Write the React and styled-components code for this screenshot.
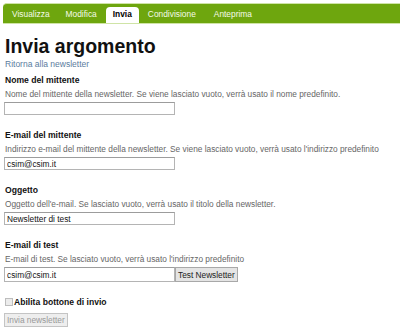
import React from "react";
import styled, { createGlobalStyle } from "styled-components";

const Global = createGlobalStyle`
  body {
    margin: 0;
    background: #fff;
    font-family: "Liberation Sans", Arial, sans-serif;
  }
`;

const Page = styled.div`
  padding: 3px 0 0 0;
`;

const TabBar = styled.div`
  display: flex;
  align-items: flex-end;
  margin-left: 3px;
  height: 19px;
  padding-left: 2px;
  background: #6ea60e;
  border-top: 1px solid #cfe4a6;
  border-bottom: 1px solid #cfe4a6;
  border-top-left-radius: 4px;
`;

const Tab = styled.div`
  height: 16px;
  line-height: 15px;
  padding: 0 ${(p) => p.$pad || 7}px;
  font-size: 8.4px;
  color: ${(p) => (p.$active ? "#000" : "#f4fae8")};
  font-weight: ${(p) => (p.$active ? "bold" : "normal")};
  background: ${(p) => (p.$active ? "#fff" : "transparent")};
  border-radius: 4px 4px 0 0;
  margin-right: ${(p) => p.$gap || 2}px;
`;

const Content = styled.div`
  padding-left: 4px;
`;

const Title = styled.h1`
  margin: 10px 0 0 1px;
  font-size: 19.5px;
  line-height: 24px;
  font-weight: bold;
  color: #111;
`;

const BackLink = styled.a`
  display: block;
  margin-left: 1px;
  font-size: 8.5px;
  line-height: 13px;
  color: #5b7c9e;
  text-decoration: none;
`;

const Section = styled.div`
  margin-top: ${(p) => p.$top || 0}px;
  margin-bottom: 13px;
`;

const Label = styled.div`
  margin-left: 1px;
  font-size: 8.6px;
  line-height: 14px;
  font-weight: bold;
  color: #111;
`;

const Desc = styled.div`
  margin-left: 1px;
  font-size: 8.3px;
  line-height: 14px;
  color: #666;
`;

const Row = styled.div`
  display: flex;
  align-items: stretch;
  margin-top: 1px;
`;

const Field = styled.input`
  box-sizing: border-box;
  display: block;
  width: 171px;
  height: ${(p) => p.$h || 13}px;
  margin: 1px 0 0 0;
  padding: 0 2px;
  border: 1px solid #b4b4b4;
  border-top-color: #9c9c9c;
  font-family: inherit;
  font-size: 8.3px;
  color: #111;
  background: #fff;
  outline: none;
`;

const Button = styled.button`
  box-sizing: border-box;
  height: ${(p) => p.$h || 15}px;
  padding: 0 2px;
  margin: 0;
  border: 1px solid ${(p) => (p.disabled ? "#c4c4c4" : "#a8a8a8")};
  background: ${(p) => (p.disabled ? "#eeeeee" : "#e4e4e4")};
  color: ${(p) => (p.disabled ? "#999" : "#222")};
  font-family: inherit;
  font-size: 8.3px;
  border-radius: 0;
`;

const CheckRow = styled.label`
  display: flex;
  align-items: center;
  margin-left: 1px;
  font-size: 8.6px;
  line-height: 14px;
  font-weight: bold;
  color: #111;
`;

const Box = styled.span`
  box-sizing: border-box;
  width: 8px;
  height: 8px;
  margin-right: 1px;
  border: 1px solid #bdbdbd;
  background: #ececec;
`;

const sections = [
  {
    label: "Nome del mittente",
    desc: "Nome del mittente della newsletter. Se viene lasciato vuoto, verrà usato il nome predefinito.",
    value: "",
  },
  {
    label: "E-mail del mittente",
    desc: "Indirizzo e-mail del mittente della newsletter. Se viene lasciato vuoto, verrà usato l'indirizzo predefinito",
    value: "csim@csim.it",
  },
  {
    label: "Oggetto",
    desc: "Oggetto dell'e-mail. Se lasciato vuoto, verrà usato il titolo della newsletter.",
    value: "Newsletter di test",
  },
];

const App = () => {
  return (
    <Page>
      <Global />
      <TabBar>
        <Tab $gap={2}>Visualizza</Tab>
        <Tab $gap={2}>Modifica</Tab>
        <Tab $active $gap={2}>Invia</Tab>
        <Tab $gap={4}>Condivisione</Tab>
        <Tab>Anteprima</Tab>
      </TabBar>
      <Content>
        <Title>Invia argomento</Title>
        <BackLink href="#">Ritorna alla newsletter</BackLink>
        {sections.map((s, i) => (
          <Section key={s.label} $top={i === 0 ? 2 : 0}>
            <Label>{s.label}</Label>
            <Desc>{s.desc}</Desc>
            <Field defaultValue={s.value} />
          </Section>
        ))}
        <Section>
          <Label>E-mail di test</Label>
          <Desc>E-mail di test. Se lasciato vuoto, verrà usato l'indirizzo predefinito</Desc>
          <Row>
            <Field defaultValue="csim@csim.it" $h={15} style={{ marginTop: 0 }} />
            <Button>Test Newsletter</Button>
          </Row>
        </Section>
        <CheckRow>
          <Box />
          Abilita bottone di invio
        </CheckRow>
        <Button disabled $h={14}>Invia newsletter</Button>
      </Content>
    </Page>
  );
};

export default App;
